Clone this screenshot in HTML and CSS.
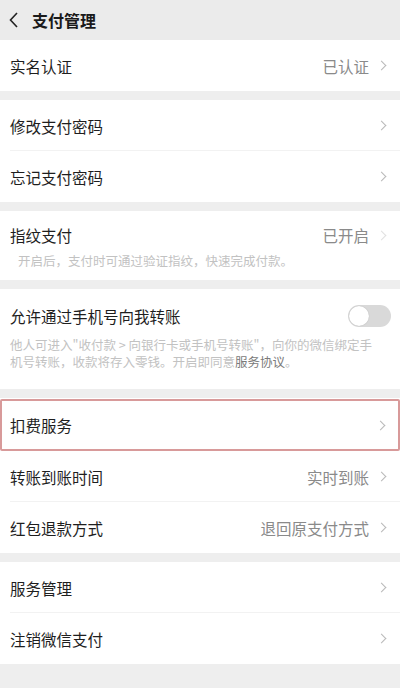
FILE: index.html
```html
<!DOCTYPE html>
<html lang="zh">
<head>
<meta charset="utf-8">
<link rel="stylesheet" href="styles.css">
</head>
<body>
<div class="page">
  <header class="topbar">
    <svg class="back" width="12" height="18" viewBox="0 0 12 18"><path d="M9 2 L2.5 9 L9 16" fill="none" stroke="#222" stroke-width="1.6"/></svg>
    <span class="title">支付管理</span>
  </header>

  <section class="group">
    <div class="row"><span class="label">实名认证</span><span class="value">已认证</span><span class="chev"></span></div>
  </section>

  <section class="group">
    <div class="row line"><span class="label">修改支付密码</span><span class="chev"></span></div>
    <div class="row"><span class="label">忘记支付密码</span><span class="chev"></span></div>
  </section>

  <section class="group">
    <div class="block finger">
      <div class="block-head"><span class="label">指纹支付</span><span class="value">已开启</span><span class="chev faint"></span></div>
      <p class="desc">开启后，支付时可通过验证指纹，快速完成付款。</p>
    </div>
  </section>

  <section class="group">
    <div class="block phone">
      <div class="block-head"><span class="label">允许通过手机号向我转账</span><span class="toggle"><span class="knob"></span></span></div>
      <p class="desc">他人可进入"收付款 &gt; 向银行卡或手机号转账"，向你的微信绑定手机号转账，收款将存入零钱。开启即同意<span class="link">服务协议</span>。</p>
    </div>
  </section>

  <section class="group">
    <div class="row hl"><span class="label">扣费服务</span><span class="chev"></span></div>
    <div class="row line"><span class="label">转账到账时间</span><span class="value">实时到账</span><span class="chev"></span></div>
    <div class="row"><span class="label">红包退款方式</span><span class="value">退回原支付方式</span><span class="chev"></span></div>
  </section>

  <section class="group">
    <div class="row line"><span class="label">服务管理</span><span class="chev"></span></div>
    <div class="row"><span class="label">注销微信支付</span><span class="chev"></span></div>
  </section>
</div>
</body>
</html>
```

FILE: styles.css
```css
* { box-sizing: border-box; }
html, body { margin: 0; padding: 0; }
body {
  width: 400px;
  height: 688px;
  overflow: hidden;
  background: #eeeeee;
  font-family: "Noto Sans CJK SC", "Noto Sans", sans-serif;
  color: #1e1e1e;
}
.page { display: flex; flex-direction: column; }
.topbar {
  height: 40px;
  background: #ebebeb;
  display: flex;
  align-items: center;
  padding-left: 8px;
  gap: 12px;
}
.title { font-size: 16px; font-weight: 700; color: #1a1a1a; }
.group {
  background: #ffffff;
  margin-bottom: 9px;
  display: flex;
  flex-direction: column;
}
.row {
  height: 51px;
  display: flex;
  align-items: center;
  padding: 0 12px 0 10px;
  position: relative;
}
.row.line::after {
  content: "";
  position: absolute;
  left: 10px; right: 0; bottom: 0;
  height: 1px;
  background: #f2f2f2;
}
.label { font-size: 15.5px; flex: 1; }
.value { font-size: 15.5px; color: #8a8a8a; margin-right: 9px; }
.chev {
  width: 7px; height: 7px;
  border-top: 1.5px solid #b8b8b8;
  border-right: 1.5px solid #b8b8b8;
  transform: rotate(45deg);
  margin-right: 3px;
}
.chev.faint { border-color: #e0e0e0; }
.row.hl { border: 2px solid #d89a9a; border-radius: 2px; height: 52px; padding-left: 8px; padding-right: 11px; margin-top: 1px; }
.block { padding: 0 12px 0 10px; }
.block-head { display: flex; align-items: center; }
.finger { height: 69px; padding-top: 13px; }
.finger .block-head { height: 22px; }
.finger .desc { margin: 6px 0 0 8px; }
.phone { height: 100px; padding-top: 16px; }
.phone .block-head { height: 22px; }
.desc {
  font-size: 12.5px;
  line-height: 17px;
  color: #c2c2c2;
  margin: 9px 0 0 0;
  padding-right: 4px;
}
.link { color: #7a7a7a; }
.toggle {
  width: 43px; height: 22px;
  border-radius: 11px;
  background: #d9d9d9;
  position: relative;
  margin-right: -3px;
}
.knob {
  position: absolute;
  left: 1px; top: 1px;
  width: 20px; height: 20px;
  border-radius: 50%;
  background: #fff;
  box-shadow: 0 0 1px rgba(0,0,0,0.25);
}
```
